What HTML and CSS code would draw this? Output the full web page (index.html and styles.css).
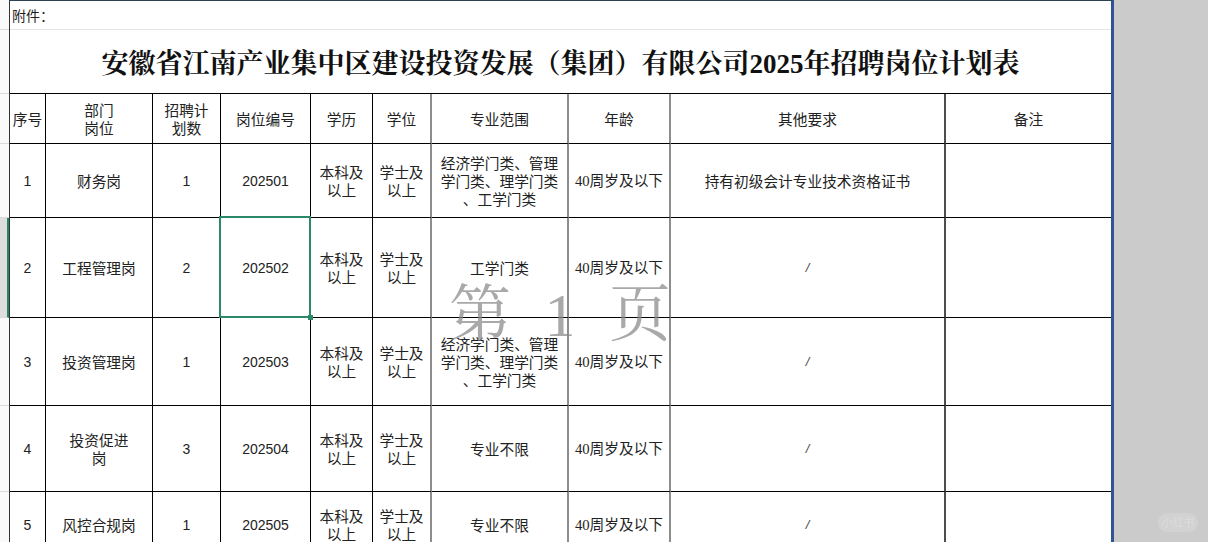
FILE: index.html
```html
<!DOCTYPE html>
<html lang="zh-CN">
<head>
<meta charset="utf-8">
<title>招聘岗位计划表</title>
<link rel="stylesheet" href="styles.css">
</head>
<body>
<div class="page">
  <div class="heads">
    <div class="head head-note"></div>
    <div class="head head-title"></div>
    <div class="head head-hdr"></div>
    <div class="head head-r1"></div>
    <div class="head head-r2 head-sel"></div>
    <div class="head head-r3"></div>
    <div class="head head-r4"></div>
    <div class="head head-r5"></div>
  </div>
  <div class="sheet">
    <div class="note">附件：</div>
    <div class="title">安徽省江南产业集中区建设投资发展（集团）有限公司2025年招聘岗位计划表</div>
    <div class="grid">
      <div class="cell">序号</div>
      <div class="cell">部门<br>岗位</div>
      <div class="cell">招聘计<br>划数</div>
      <div class="cell">岗位编号</div>
      <div class="cell">学历</div>
      <div class="cell gcol">学位</div>
      <div class="cell gcol">专业范围</div>
      <div class="cell gcol">年龄</div>
      <div class="cell dcol">其他要求</div>
      <div class="cell last">备注</div>

      <div class="cell num">1</div>
      <div class="cell">财务岗</div>
      <div class="cell num">1</div>
      <div class="cell num">202501</div>
      <div class="cell">本科及<br>以上</div>
      <div class="cell gcol">学士及<br>以上</div>
      <div class="cell gcol">经济学门类、管理<br>学门类、理学门类<br>、工学门类</div>
      <div class="cell gcol age">40周岁及以下</div>
      <div class="cell dcol">持有初级会计专业技术资格证书</div>
      <div class="cell last"></div>

      <div class="cell num">2</div>
      <div class="cell">工程管理岗</div>
      <div class="cell num">2</div>
      <div class="cell num sel">202502</div>
      <div class="cell">本科及<br>以上</div>
      <div class="cell gcol">学士及<br>以上</div>
      <div class="cell gcol">工学门类</div>
      <div class="cell gcol age">40周岁及以下</div>
      <div class="cell dcol slash">/</div>
      <div class="cell last"></div>

      <div class="cell num">3</div>
      <div class="cell">投资管理岗</div>
      <div class="cell num">1</div>
      <div class="cell num">202503</div>
      <div class="cell">本科及<br>以上</div>
      <div class="cell gcol">学士及<br>以上</div>
      <div class="cell gcol">经济学门类、管理<br>学门类、理学门类<br>、工学门类</div>
      <div class="cell gcol age">40周岁及以下</div>
      <div class="cell dcol slash">/</div>
      <div class="cell last"></div>

      <div class="cell num">4</div>
      <div class="cell">投资促进<br>岗</div>
      <div class="cell num">3</div>
      <div class="cell num">202504</div>
      <div class="cell">本科及<br>以上</div>
      <div class="cell gcol">学士及<br>以上</div>
      <div class="cell gcol">专业不限</div>
      <div class="cell gcol age">40周岁及以下</div>
      <div class="cell dcol slash">/</div>
      <div class="cell last"></div>

      <div class="cell num">5</div>
      <div class="cell">风控合规岗</div>
      <div class="cell num">1</div>
      <div class="cell num">202505</div>
      <div class="cell">本科及<br>以上</div>
      <div class="cell gcol">学士及<br>以上</div>
      <div class="cell gcol">专业不限</div>
      <div class="cell gcol age">40周岁及以下</div>
      <div class="cell dcol slash">/</div>
      <div class="cell last"></div>
    </div>
    <div class="watermark">第 1 页</div>
  </div>
  <div class="gutter">
    <div class="badge">小红书</div>
  </div>
</div>
</body>
</html>
```
FILE: styles.css
```css
* { box-sizing: border-box; }
html, body {
  margin: 0;
  padding: 0;
  width: 1208px;
  height: 542px;
  overflow: hidden;
  background: #cbcbcb;
}
body {
  font-family: "Noto Sans CJK SC", "Noto Sans", sans-serif;
  color: #1e1e1e;
}
.page {
  display: flex;
  height: 542px;
  overflow: hidden;
}
.heads {
  width: 9px;
  flex: none;
  display: flex;
  flex-direction: column;
  background: #fafafa;
}
.head {
  flex: none;
  border-bottom: 1px solid #dadada;
}
.head-note { height: 30px; }
.head-title { height: 64px; }
.head-hdr { height: 50px; }
.head-r1 { height: 74px; }
.head-r2 { height: 100px; }
.head-r3 { height: 88px; }
.head-r4 { height: 86px; }
.head-r5 { flex: 1; border-bottom: none; }
.head-sel {
  background: #dedede;
  border-right: 2px solid #2a8466;
}
.sheet {
  position: relative;
  width: 1105px;
  flex: none;
  background: #fff;
  border-top: 1px solid #2c4250;
  border-left: 1px solid #333;
  border-right: 3px solid #2f5597;
  display: flex;
  flex-direction: column;
  overflow: hidden;
}
.note {
  flex: none;
  height: 29px;
  border-bottom: 1px solid #e4e4e4;
  font-size: 14px;
  line-height: 28px;
  padding-left: 2px;
}
.title {
  flex: none;
  height: 63px;
  display: flex;
  align-items: center;
  justify-content: center;
  font-family: "Liberation Serif", "Noto Serif CJK SC", "Noto Sans CJK SC", serif;
  font-weight: 700;
  font-size: 27px;
  color: #111;
}
.grid {
  flex: none;
  display: grid;
  grid-template-columns: 36px 107px 68px 90px 62px 59px 137px 102px 275px 165px;
  grid-template-rows: 50px 74px 100px 88px 86px 66px;
  border-top: 1px solid #000;
}
.cell {
  display: flex;
  align-items: center;
  justify-content: center;
  text-align: center;
  font-size: 14.7px;
  line-height: 18px;
  border-right: 1px solid #000;
  border-bottom: 1px solid #000;
  color: #222;
}
.cell.gcol { border-right: 2px solid #8d8d8d; }
.cell.dcol { border-right: 2px solid #4d4d4d; }
.cell.last { border-right: none; }
.num {
  font-family: "Liberation Sans", "Noto Sans CJK SC", sans-serif;
  font-size: 14px;
}
.age {
  font-family: "Liberation Serif", "Noto Sans CJK SC", serif;
}
.slash {
  font-family: "Liberation Sans", sans-serif;
  font-style: italic;
  font-size: 13px;
  color: #444;
}
.sel { position: relative; }
.sel::after {
  content: "";
  position: absolute;
  top: -2px;
  left: -2px;
  right: -1px;
  bottom: -1px;
  border: 2px solid #2b8868;
}
.sel::before {
  content: "";
  position: absolute;
  right: -3px;
  bottom: -3px;
  width: 5px;
  height: 5px;
  background: #2b8868;
  z-index: 2;
}
.watermark {
  position: absolute;
  left: 439px;
  top: 283px;
  font-family: "Liberation Serif", "Noto Serif CJK SC", "Noto Sans CJK SC", serif;
  font-size: 62px;
  line-height: 1;
  color: rgba(140, 140, 140, 0.75);
  word-spacing: 18px;
  pointer-events: none;
  white-space: nowrap;
}
.gutter {
  position: relative;
  flex: 1;
  background: #cbcbcb;
}
.badge {
  position: absolute;
  right: 10px;
  bottom: 10px;
  width: 40px;
  height: 19px;
  border-radius: 10px;
  background: #d2d2d2;
  color: #dcdcdc;
  font-size: 11px;
  line-height: 19px;
  text-align: center;
}
```
